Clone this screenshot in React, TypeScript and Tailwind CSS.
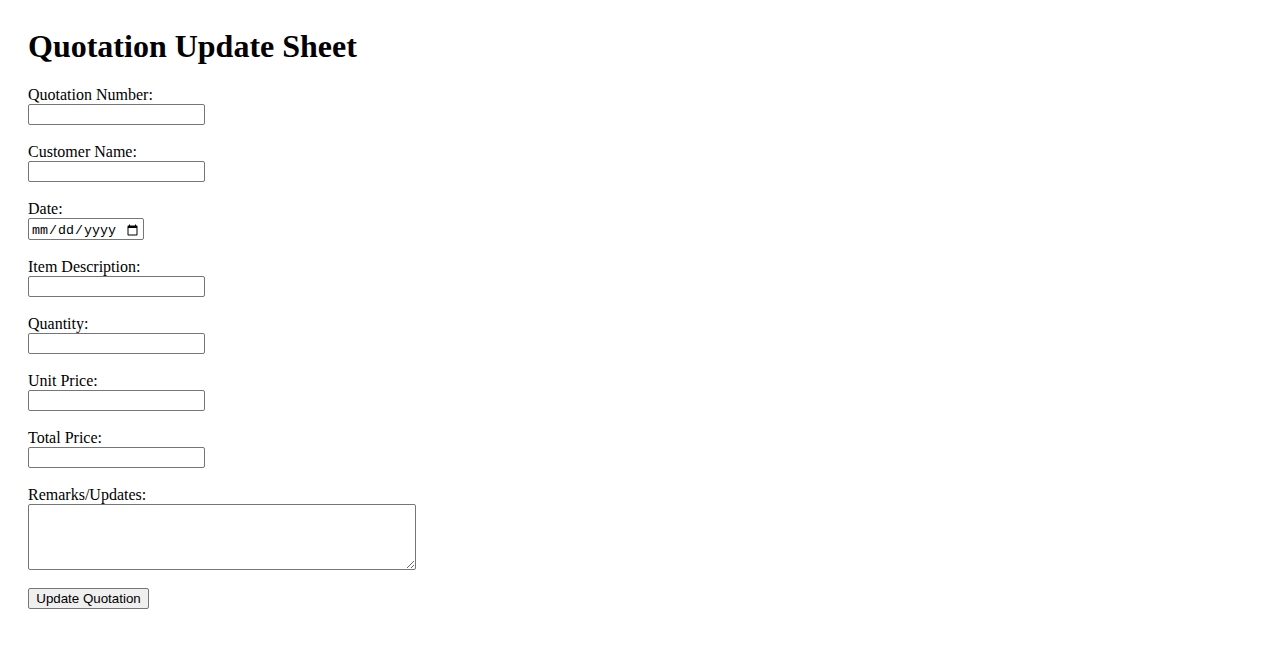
import React from "react";

const serif = "font-['Liberation_Serif','Times_New_Roman',serif]";

function Field({ label, children }: { label: string; children: React.ReactNode }) {
  return (
    <div className="mb-[18px]">
      <label className="block h-[18px] leading-[18px] text-[16px] text-black">{label}</label>
      {children}
    </div>
  );
}

const inputCls =
  "block w-[177px] h-[21px] border border-[#767676] rounded-[2px] bg-white px-[2px] py-[1px] text-[13.33px] font-['Liberation_Sans',Arial,sans-serif]";

export default function App() {
  return (
    <div className={`min-h-[650px] w-full bg-white text-black pt-[28px] pl-[28px] ${serif}`}>
      <h1 className="text-[32px] font-bold leading-[37px] mb-[21px]">Quotation Update Sheet</h1>
      <form onSubmit={(e) => e.preventDefault()}>
        <Field label="Quotation Number:">
          <input type="text" className={inputCls} />
        </Field>
        <Field label="Customer Name:">
          <input type="text" className={inputCls} />
        </Field>
        <Field label="Date:">
          <input
            type="date"
            className="block w-[116px] h-[22px] border border-[#767676] rounded-[2px] bg-white pl-[2px] pr-[2px] pt-[3px] pb-0 text-[13.33px] font-['Liberation_Mono','Courier_New',monospace]"
          />
        </Field>
        <Field label="Item Description:">
          <input type="text" className={inputCls} />
        </Field>
        <Field label="Quantity:">
          <input type="text" className={inputCls} />
        </Field>
        <Field label="Unit Price:">
          <input type="text" className={inputCls} />
        </Field>
        <Field label="Total Price:">
          <input type="text" className={inputCls} />
        </Field>
        <Field label="Remarks/Updates:">
          <textarea className="block w-[388px] h-[66px] border border-[#767676] rounded-[2px] bg-white px-[2px] py-[2px] text-[13.33px] font-['Liberation_Mono',monospace]" />
        </Field>
        <button
          type="submit"
          className="block h-[21px] w-[121px] border border-[#767676] rounded-[2px] bg-[#efefef] px-[6px] text-[13.33px] leading-[19px] text-black font-['Liberation_Sans',Arial,sans-serif]"
        >
          Update Quotation
        </button>
      </form>
    </div>
  );
}
